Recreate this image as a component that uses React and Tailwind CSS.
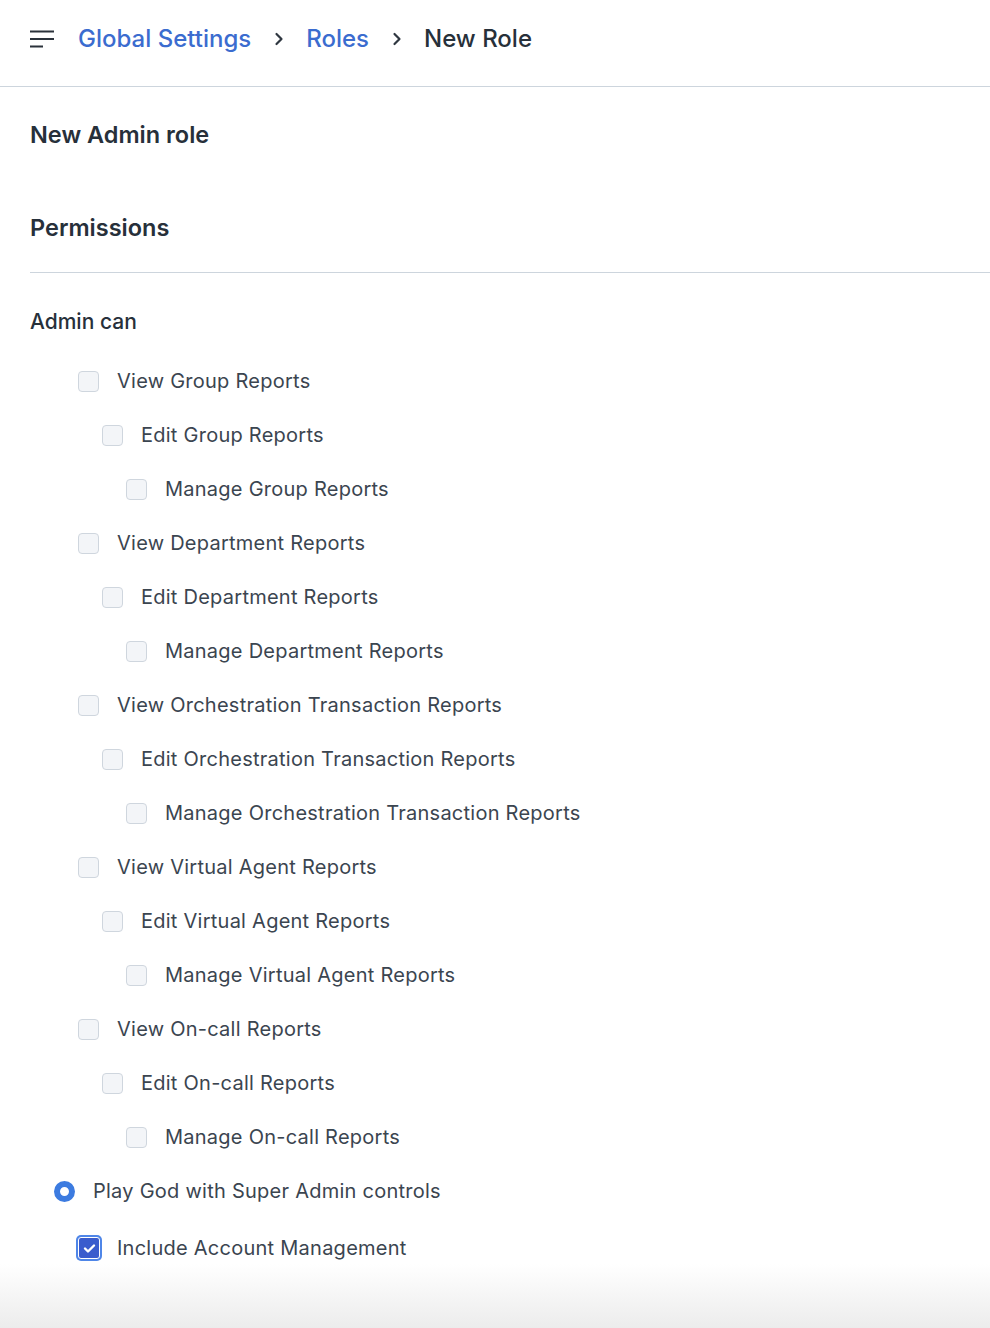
import { useState } from "react";

const permisos = [
  ["View Group Reports", 0],
  ["Edit Group Reports", 1],
  ["Manage Group Reports", 2],
  ["View Department Reports", 0],
  ["Edit Department Reports", 1],
  ["Manage Department Reports", 2],
  ["View Orchestration Transaction Reports", 0],
  ["Edit Orchestration Transaction Reports", 1],
  ["Manage Orchestration Transaction Reports", 2],
  ["View Virtual Agent Reports", 0],
  ["Edit Virtual Agent Reports", 1],
  ["Manage Virtual Agent Reports", 2],
  ["View On-call Reports", 0],
  ["Edit On-call Reports", 1],
  ["Manage On-call Reports", 2],
];

const sangrias = ["pl-[78px]", "pl-[102px]", "pl-[126px]"];

const Chevron = () => (
  <svg width="10" height="14" viewBox="0 0 10 14" fill="none" className="ml-[23px] mr-[22px]">
    <path d="M2.5 2 L7.5 7 L2.5 12" stroke="#2f3740" strokeWidth="2.2" strokeLinecap="round" strokeLinejoin="round" />
  </svg>
);

const App = () => {
  const [marcados, setMarcados] = useState({});
  const [cuenta, setCuenta] = useState(true);

  return (
    <div className="min-h-[1328px] bg-white font-['Inter',sans-serif] relative overflow-hidden">
      <header className="h-[87px] border-b border-[#cdd5dd] flex items-center pl-[30px] pb-[8px]">
        <svg width="25" height="18" viewBox="0 0 25 18" className="mr-[23px]">
          <rect x="0" y="0.5" width="24" height="2" fill="#2b323b" />
          <rect x="0" y="8" width="24" height="2" fill="#2b323b" />
          <rect x="0" y="15.5" width="13" height="2" fill="#2b323b" />
        </svg>
        <span className="text-[24px] font-medium text-[#3b6ccf]">Global Settings</span>
        <Chevron />
        <span className="text-[24px] font-medium text-[#3b6ccf]">Roles</span>
        <Chevron />
        <span className="text-[24px] font-medium text-[#27303a]">New Role</span>
      </header>

      <div className="pl-[30px]">
        <h1 className="text-[23.5px] font-semibold text-[#27303a] mt-[33px] leading-[30px]">New Admin role</h1>
        <h2 className="text-[23.5px] font-semibold text-[#27303a] mt-[63px] leading-[30px]">Permissions</h2>
        <div className="border-b border-[#cdd5dd] mt-[29px]" />
        <h3 className="text-[21px] font-medium text-[#27303a] mt-[35px] leading-[28px]">Admin can</h3>
      </div>

      <div className="mt-[34px] flex flex-col gap-[32px]">
        {permisos.map(([texto, nivel]) => (
          <label key={texto} className={`flex items-center h-[22px] cursor-pointer ${sangrias[nivel]}`}>
            <input
              type="checkbox"
              className="hidden"
              checked={!!marcados[texto]}
              onChange={() => setMarcados({ ...marcados, [texto]: !marcados[texto] })}
            />
            <span
              className={`w-[21px] h-[21px] rounded-[4px] border ${
                marcados[texto] ? "bg-[#3a5fcf] border-[#3a5fcf]" : "bg-[#f3f5f8] border-[#cfd6de]"
              }`}
            />
            <span className="ml-[18px] text-[20px] text-[#3b4550] tracking-[0.25px]">{texto}</span>
          </label>
        ))}

        <label className="flex items-center h-[22px] pl-[54px]">
          <span className="w-[21px] h-[21px] rounded-full border-[6px] border-[#3c7be0] bg-white" />
          <span className="ml-[18px] text-[20px] text-[#3b4550] tracking-[0.25px]">Play God with Super Admin controls</span>
        </label>

        <label className="flex items-center h-[22px] pl-[76px] mt-[3px] cursor-pointer" onClick={() => setCuenta(!cuenta)}>
          <span className="w-[26px] h-[26px] rounded-[5px] bg-[#4f86e8] p-[2px] flex">
            <span className="flex-1 rounded-[3px] bg-[#3a5ccd] border border-white flex items-center justify-center">
              {cuenta && (
                <svg width="13" height="11" viewBox="0 0 13 11" fill="none">
                  <path d="M2 5.5 L5 8.5 L11 2.5" stroke="white" strokeWidth="2.4" strokeLinecap="round" strokeLinejoin="round" />
                </svg>
              )}
            </span>
          </span>
          <span className="ml-[15px] text-[20px] text-[#3b4550] tracking-[0.25px]">Include Account Management</span>
        </label>
      </div>

      <div className="absolute bottom-0 left-0 right-0 h-[64px] bg-gradient-to-b from-white/0 to-[#ececec] pointer-events-none" />
    </div>
  );
};

export default App;
